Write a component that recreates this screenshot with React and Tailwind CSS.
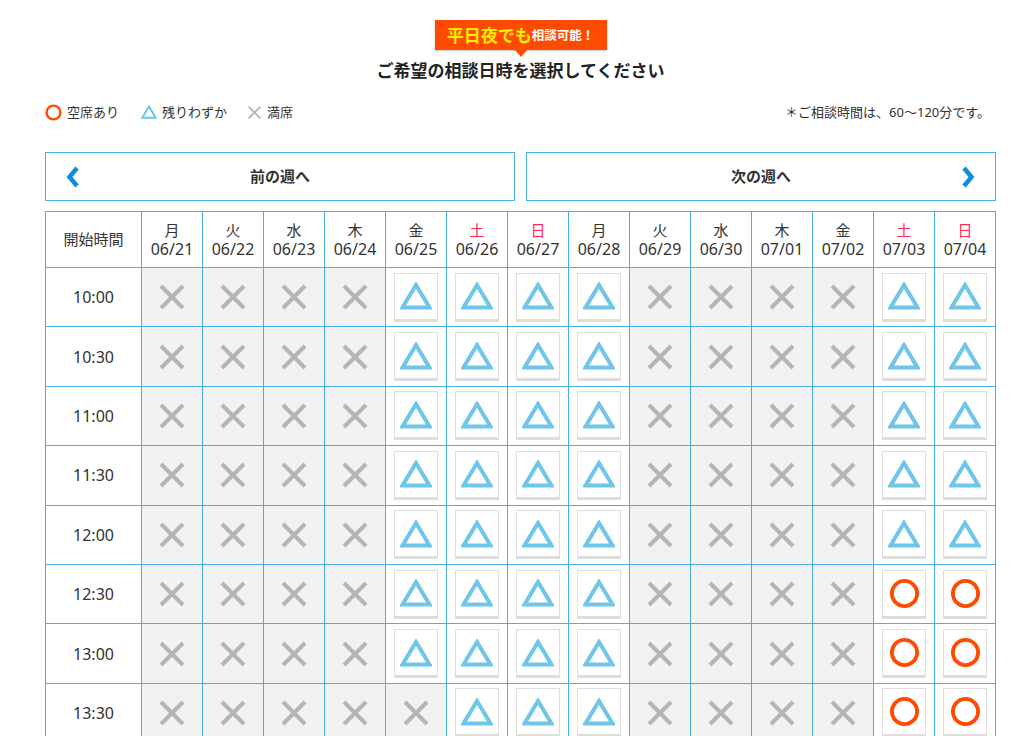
import React from "react";

const days = [
  { w: "月", d: "06/21" },
  { w: "火", d: "06/22" },
  { w: "水", d: "06/23" },
  { w: "木", d: "06/24" },
  { w: "金", d: "06/25" },
  { w: "土", d: "06/26", red: true },
  { w: "日", d: "06/27", red: true },
  { w: "月", d: "06/28" },
  { w: "火", d: "06/29" },
  { w: "水", d: "06/30" },
  { w: "木", d: "07/01" },
  { w: "金", d: "07/02" },
  { w: "土", d: "07/03", red: true },
  { w: "日", d: "07/04", red: true },
];

const times = ["10:00", "10:30", "11:00", "11:30", "12:00", "12:30", "13:00", "13:30"];

// x = full, t = few left, o = available
const getSlot = (row, col) => {
  if ([0, 1, 2, 3, 8, 9, 10, 11].includes(col)) return "x";
  if (col === 4) return row >= 7 ? "x" : "t";
  if (col >= 12) return row >= 5 ? "o" : "t";
  return "t";
};

const Cross = ({ size = 28, stroke = 4 }) => (
  <svg width={size} height={size} viewBox="0 0 28 28">
    <path d="M3 3 L25 25 M25 3 L3 25" stroke="#b5b5b5" strokeWidth={stroke} strokeLinecap="butt" />
  </svg>
);

const Triangle = ({ size = 32, stroke = 4 }) => (
  <svg width={size} height={size * 0.875} viewBox="0 0 32 28">
    <path d="M16 3 L29.5 25.5 L2.5 25.5 Z" fill="none" stroke="#6fc6ea" strokeWidth={stroke} strokeLinejoin="miter" />
  </svg>
);

const Circle = ({ size = 32, stroke = 4 }) => (
  <svg width={size} height={size} viewBox="0 0 32 32">
    <circle cx="16" cy="16" r="13" fill="none" stroke="#ff4b00" strokeWidth={stroke} />
  </svg>
);

const SlotCell = ({ type }) => {
  if (type === "x") {
    return (
      <td className="bg-[#f2f2f2] border border-[#48b0e4] p-0">
        <div className="flex items-center justify-center">
          <Cross />
        </div>
      </td>
    );
  }
  return (
    <td className="bg-white border border-[#48b0e4] p-0">
      <div className="flex items-center justify-center">
        <button className="w-[44px] h-[49px] bg-white border border-[#dedede] border-b-[3px] flex items-center justify-center cursor-pointer">
          {type === "t" ? <Triangle /> : <Circle size={31} />}
        </button>
      </div>
    </td>
  );
};

export default function App() {
  return (
    <div
      className="h-[736px] overflow-hidden bg-white text-[#333]"
      style={{ fontFamily: '"Noto Sans", "Noto Sans CJK JP", sans-serif' }}
    >
      <div className="w-[951px] ml-[45px] pt-[20px]">
        {/* heading */}
        <div className="flex flex-col items-center">
          <div className="relative bg-[#ff4b00] h-[30px] w-[172px] flex items-center justify-center shadow-[0_1px_2px_rgba(0,0,0,0.25)]">
            <span className="text-[#ffee00] font-bold text-[17px] leading-none">平日夜でも</span>
            <span className="text-white font-bold text-[12.5px] leading-none mt-[3px]">相談可能！</span>
            <span className="absolute left-1/2 -translate-x-1/2 top-full w-0 h-0 border-l-[6px] border-r-[6px] border-t-[7px] border-l-transparent border-r-transparent border-t-[#ff4b00]" />
          </div>
          <h1 className="mt-[10px] text-[17px] font-bold leading-[22px] text-[#222]">
            ご希望の相談日時を選択してください
          </h1>
        </div>

        {/* legend */}
        <div className="mt-[21px] flex items-center justify-between text-[13px] leading-[18px]">
          <div className="flex items-center">
            <span className="flex items-center gap-[5px]">
              <Circle size={17} stroke={4.5} />
              空席あり
            </span>
            <span className="flex items-center gap-[5px] ml-[22px]">
              <Triangle size={16} stroke={4} />
              残りわずか
            </span>
            <span className="flex items-center gap-[5px] ml-[20px]">
              <Cross size={15} stroke={3.5} />
              満席
            </span>
          </div>
          <div className="text-[13px] mr-[6px]">＊ご相談時間は、60〜120分です。</div>
        </div>

        {/* week nav */}
        <div className="mt-[31px] flex gap-[11px]">
          <button className="relative flex-1 h-[49px] border border-[#48b0e4] bg-white flex items-center justify-center text-[15px] font-bold">
            <svg className="absolute left-[19px] top-1/2 -translate-y-1/2" width="15" height="24" viewBox="0 0 15 24">
              <path d="M12 3 L4.5 12 L12 21" fill="none" stroke="#0d8fd8" strokeWidth="4.5" />
            </svg>
            前の週へ
          </button>
          <button className="relative flex-1 h-[49px] border border-[#48b0e4] bg-white flex items-center justify-center text-[15px] font-bold">
            次の週へ
            <svg className="absolute right-[19px] top-1/2 -translate-y-1/2" width="15" height="24" viewBox="0 0 15 24">
              <path d="M3 3 L10.5 12 L3 21" fill="none" stroke="#0d8fd8" strokeWidth="4.5" />
            </svg>
          </button>
        </div>

        {/* schedule */}
        <table className="mt-[10px] w-[951px] table-fixed border-collapse text-[16px]">
          <thead>
            <tr className="h-[56px]">
              <th className="w-[96px] border border-[#48b0e4] font-normal text-[15px]">開始時間</th>
              {days.map((day) => (
                <th key={day.d} className="border border-[#48b0e4] font-normal leading-[19px]">
                  <div className={day.red ? "text-[15px] text-[#ff2a55]" : "text-[15px]"}>{day.w}</div>
                  <div>{day.d}</div>
                </th>
              ))}
            </tr>
          </thead>
          <tbody>
            {times.map((time, row) => (
              <tr key={time} className="h-[59.4px]">
                <td className="border border-[#48b0e4] text-center">{time}</td>
                {days.map((day, col) => (
                  <SlotCell key={day.d} type={getSlot(row, col)} />
                ))}
              </tr>
            ))}
          </tbody>
        </table>
      </div>
    </div>
  );
}
